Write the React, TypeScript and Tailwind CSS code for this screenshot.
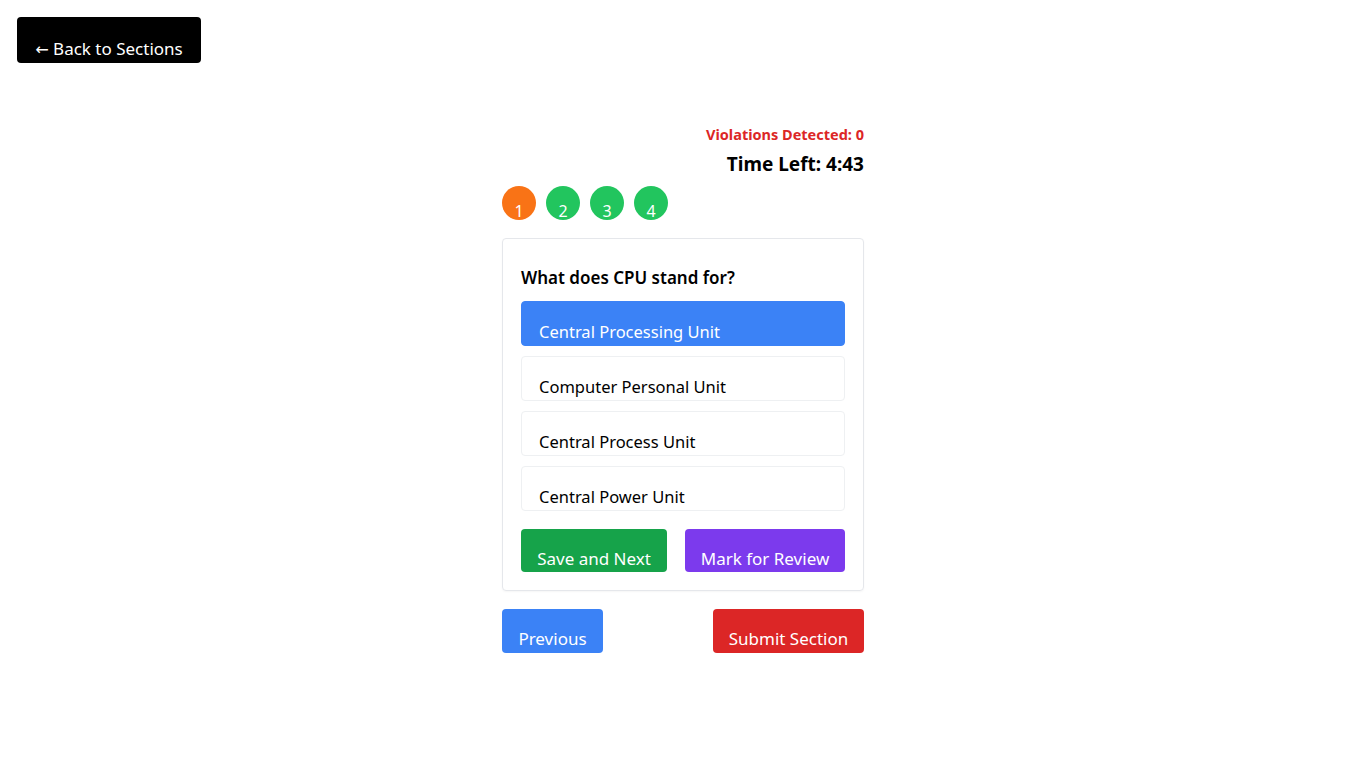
import { useState } from 'react'

const OPTIONS = [
  'Central Processing Unit',
  'Computer Personal Unit',
  'Central Process Unit',
  'Central Power Unit',
]

const QUESTIONS = [
  { n: 1, color: 'bg-[#f97316]' },
  { n: 2, color: 'bg-[#22c55e]' },
  { n: 3, color: 'bg-[#22c55e]' },
  { n: 4, color: 'bg-[#22c55e]' },
]

export default function App() {
  const [selected, setSelected] = useState(0)

  return (
    <div className="min-h-[767px] bg-white font-['Noto_Sans',sans-serif] text-black">
      <div className="px-[17px] pt-[17px]">
        <button className="h-[46px] w-[184px] rounded-[4px] bg-black pt-[18px] text-[17px] leading-[24px] text-white">
          <span className="font-['DejaVu_Sans',sans-serif] text-[16px]">←</span> Back to Sections
        </button>
      </div>

      <div className="mx-auto mt-[61px] flex w-[362px] flex-col">
        <p className="text-right text-[14.5px] font-bold leading-[20px] text-[#dc2626]">Violations Detected: 0</p>
        <p className="mt-[8px] text-right text-[19px] font-bold leading-[24px]">Time Left: 4:43</p>

        <div className="mt-[10px] flex gap-[10px]">
          {QUESTIONS.map((q) => (
            <div
              key={q.n}
              className={`flex h-[34px] w-[34px] items-start justify-center rounded-full pt-[14px] text-[16px] leading-[22px] text-white ${q.color}`}
            >
              {q.n}
            </div>
          ))}
        </div>

        <div className="mt-[18px] rounded-[4px] border border-[#e5e7eb] px-[18px] pb-[18px] pt-[27px] shadow-[0_1px_2px_rgba(0,0,0,0.04)]">
          <p className="text-[17px] font-semibold leading-[24px]">What does CPU stand for?</p>

          <div className="mt-[11px] flex flex-col gap-[10px]">
            {OPTIONS.map((opt, i) => (
              <button
                key={opt}
                onClick={() => setSelected(i)}
                className={`h-[45px] rounded-[4px] border px-[17px] pt-[17px] text-left text-[16.5px] leading-[24px] ${
                  selected === i ? 'border-[#3b82f6] bg-[#3b82f6] text-white' : 'border-[#eef0f2] bg-white text-black'
                }`}
              >
                {opt}
              </button>
            ))}
          </div>

          <div className="mt-[18px] flex justify-between">
            <button className="h-[43px] w-[146px] rounded-[4px] bg-[#16a34a] pt-[16px] text-[17px] leading-[24px] text-white">
              Save and Next
            </button>
            <button className="h-[43px] w-[160px] rounded-[4px] bg-[#7c3aed] pt-[16px] text-[17px] leading-[24px] text-white">
              Mark for Review
            </button>
          </div>
        </div>

        <div className="mt-[18px] flex justify-between">
          <button className="h-[44px] w-[101px] rounded-[4px] bg-[#3b82f6] pt-[16px] text-[17px] leading-[24px] text-white">
            Previous
          </button>
          <button className="h-[44px] w-[151px] rounded-[4px] bg-[#dc2626] pt-[16px] text-[17px] leading-[24px] text-white">
            Submit Section
          </button>
        </div>
      </div>
    </div>
  )
}
